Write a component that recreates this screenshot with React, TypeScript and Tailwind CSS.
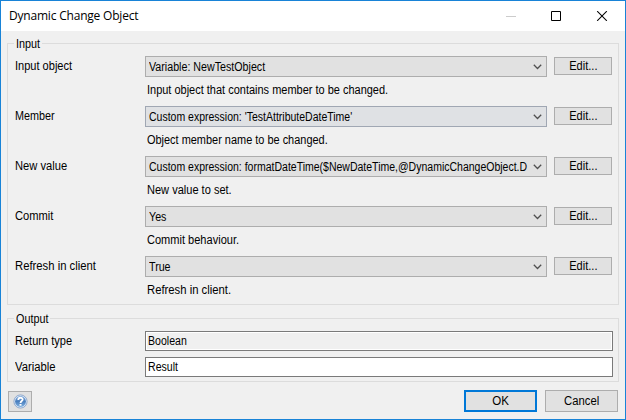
import type { ReactNode } from 'react';

type Row = { label: string; value: string; hint: string; labelCls: string; valueCls: string; hintCls: string; active?: boolean };

const rows: Row[] = [
  { label: 'Input object', value: 'Variable: NewTestObject', hint: 'Input object that contains member to be changed.', labelCls: 'scale-x-[0.92]', valueCls: 'scale-x-[0.89]', hintCls: 'scale-x-[0.915]' },
  { label: 'Member', value: "Custom expression: 'TestAttributeDateTime'", hint: 'Object member name to be changed.', labelCls: 'scale-x-[0.9]', valueCls: 'scale-x-[0.875]', hintCls: 'scale-x-[0.912]', active: true },
  { label: 'New value', value: 'Custom expression: formatDateTime($NewDateTime,@DynamicChangeObject.D', hint: 'New value to set.', labelCls: 'scale-x-[0.93]', valueCls: 'scale-x-[0.875]', hintCls: 'scale-x-[0.92]' },
  { label: 'Commit', value: 'Yes', hint: 'Commit behaviour.', labelCls: 'scale-x-[0.93]', valueCls: 'scale-x-[0.89]', hintCls: 'scale-x-[0.92]' },
  { label: 'Refresh in client', value: 'True', hint: 'Refresh in client.', labelCls: 'scale-x-[0.94]', valueCls: 'scale-x-[0.89]', hintCls: 'scale-x-[0.94]' },
];

function Text({ cls, center, children }: { cls: string; center?: boolean; children: ReactNode }) {
  return <span className={`inline-block whitespace-nowrap ${center ? 'origin-center' : 'origin-left'} ${cls}`}>{children}</span>;
}

function Group({ title, width, className, children }: { title: string; width: string; className: string; children: ReactNode }) {
  return (
    <section className={`relative border border-[#dcdcdc] ${className}`}>
      <h2 className={`absolute -top-[7px] left-[6px] bg-[#f0f0f0] pl-[1.5px] leading-[15px] ${width}`}>
        <Text cls="scale-x-[0.9]">{title}</Text>
      </h2>
      {children}
    </section>
  );
}

function Combo({ value, cls, active }: { value: string; cls: string; active?: boolean }) {
  return (
    <div className={`flex h-[21px] w-[402px] items-center border pl-[3px] ${active ? 'border-[#a0a7b3] bg-[#dfe1e4]' : 'border-[#adadad] bg-[#e1e1e1]'}`}>
      <div className="w-[379px] pt-px leading-[19px]">
        <Text cls={cls}>{value}</Text>
      </div>
      <svg className="ml-[5px] h-[6px] w-[10px]" viewBox="0 0 10 6" fill="none" stroke="#505050" strokeWidth="1.3">
        <path d="M0.8 0.8L4.5 4.5L8.2 0.8" />
      </svg>
    </div>
  );
}

function HelpIcon() {
  return (
    <svg className="h-[15px] w-[15px]" viewBox="0 0 15 15">
      <defs>
        <linearGradient id="orb" x1="0" y1="0" x2="0" y2="1">
          <stop offset="0" stopColor="#7ca6d8" />
          <stop offset="0.5" stopColor="#4a7fbe" />
          <stop offset="1" stopColor="#7fb0e0" />
        </linearGradient>
      </defs>
      <circle cx="7.5" cy="7.5" r="6.6" fill="#dce8f6" stroke="#7d9cc6" strokeWidth="0.8" />
      <circle cx="7.5" cy="7.5" r="5.4" fill="url(#orb)" />
      <path d="M5.3 5.9C5.3 3.1 9.7 3.1 9.7 5.6C9.7 7.1 7.5 7.1 7.5 9" fill="none" stroke="#fff" strokeWidth="1.8" />
      <rect x="6.5" y="10" width="2" height="1.7" fill="#fff" />
    </svg>
  );
}

export default function App() {
  return (
    <main className="flex h-[420px] w-[626px] flex-col overflow-hidden border border-[#1883d7] bg-[#f0f0f0] font-['Liberation_Sans',Arial,sans-serif] text-[12px] text-black">
      <header className="flex h-[30px] shrink-0 items-center bg-white">
        <h1 className="ml-2 font-['Open_Sans','Noto_Sans',sans-serif] text-[12px] leading-[16px] tracking-[-0.2px]">Dynamic Change Object</h1>
        <svg className="ml-auto mr-[17px] h-[10px] w-[102px]" viewBox="0 0 102 10" fill="none">
          <path d="M0 5.5H10" stroke="#ccc" />
          <path d="M45.5 0.5H54.5V9.5H45.5Z" stroke="#000" />
          <path d="M91.2 0.2L100.8 9.8M100.8 0.2L91.2 9.8" stroke="#000" strokeWidth="1.1" />
        </svg>
      </header>

      <div className="flex flex-col px-[6px] pt-3">
        <Group title="Input" width="w-[28px]" className="h-[262px] pt-3">
          {rows.map((r) => (
            <div key={r.label} className="grid h-[50px] grid-cols-[137px_402px_65px] grid-rows-[21px_29px]">
              <label className="pl-[7px] leading-[20px]">
                <Text cls={r.labelCls}>{r.label}</Text>
              </label>
              <Combo value={r.value} cls={r.valueCls} active={r.active} />
              <button className="ml-[7px] mt-px h-[18px] w-[58px] border border-[#adadad] bg-[#e1e1e1] leading-[16px]">
                <Text cls="scale-x-[0.92]" center>Edit...</Text>
              </button>
              <p className="col-start-2 pl-[2px] pt-[5px] leading-[16px]">
                <Text cls={r.hintCls}>{r.hint}</Text>
              </p>
            </div>
          ))}
        </Group>

        <Group title="Output" width="w-[36px]" className="mt-[13px] flex h-[64px] flex-col gap-[6px] pt-3">
          <div className="flex h-5 items-center">
            <label className="w-[137px] pl-[7px]">
              <Text cls="scale-x-[0.92]">Return type</Text>
            </label>
            <div className="h-5 w-[468px] border border-[#7a7a7a] bg-[#f0f0f0] pl-[2px] leading-[18px] shadow-[inset_0_0_0_1px_#fff]">
              <Text cls="scale-x-[0.88]">Boolean</Text>
            </div>
          </div>
          <div className="flex h-5 items-center">
            <label className="w-[137px] pl-[7px]">
              <Text cls="scale-x-[0.94]">Variable</Text>
            </label>
            <div className="h-5 w-[468px] border border-[#7a7a7a] bg-white pl-[2px] leading-[18px]">
              <Text cls="scale-x-[0.88]">Result</Text>
            </div>
          </div>
        </Group>
      </div>

      <footer className="mt-2 flex h-[22px] gap-2 pl-[7px]">
        <button className="mt-px flex h-[21px] w-6 items-center justify-center border border-[#adadad] bg-[#e1e1e1]" aria-label="Help">
          <HelpIcon />
        </button>
        <button className="ml-[424px] h-[22px] w-[73px] border-2 border-[#0078d7] bg-[#e1e1e1] leading-[18px]">
          <Text cls="scale-x-[0.96]" center>OK</Text>
        </button>
        <button className="h-[22px] w-[73px] border border-[#adadad] bg-[#e1e1e1] leading-[20px]">
          <Text cls="scale-x-[0.94]" center>Cancel</Text>
        </button>
      </footer>
    </main>
  );
}
